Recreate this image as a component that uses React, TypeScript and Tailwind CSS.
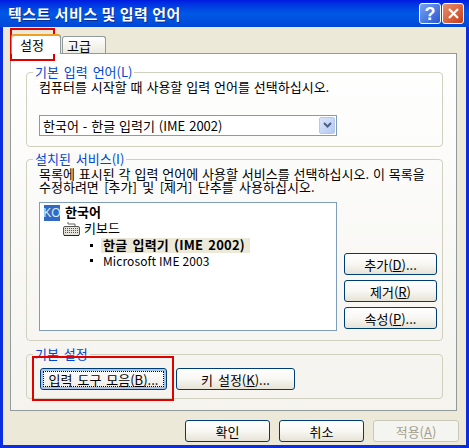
import React from "react";

const font = { fontFamily: '"Noto Sans CJK KR", "Liberation Sans", sans-serif' };

function XpButton({ w, children, focused, disabled }: { w: string; children: React.ReactNode; focused?: boolean; disabled?: boolean }) {
  return (
    <div
      className={`${w} h-[22px] shrink-0 rounded-[3px] border flex items-center justify-center text-[13px] leading-none [word-spacing:2px] ${
        disabled
          ? "border-[#c9c7ba] bg-[#f4f4f0] text-[#a3a08f]"
          : focused
          ? "border-[#003c74] bg-gradient-to-b from-white to-[#ecebe5] text-black shadow-[inset_0_0_0_2px_#a9c4ea]"
          : "border-[#003c74] bg-gradient-to-b from-white via-[#f8f7f3] to-[#e6e3d6] text-black"
      }`}
    >
      {focused ? (
        <span className="flex h-full w-full items-center justify-center p-[2px]">
          <span className="flex h-full w-full items-center justify-center border border-dotted border-black">{children}</span>
        </span>
      ) : (
        children
      )}
    </div>
  );
}

function Legend({ children, bg }: { children: React.ReactNode; bg: string }) {
  return (
    <span className={`${bg} absolute left-[6px] top-[-8px] px-[2px] text-[13px] leading-[14px] text-[#0046d5] whitespace-nowrap [word-spacing:2px]`}>
      {children}
    </span>
  );
}

function Keyboard() {
  return (
    <svg width="17" height="16" viewBox="0 0 17 16" className="shrink-0">
      <path d="M12 5V3H5V1" fill="none" stroke="#666" />
      <rect x="0.5" y="5.5" width="16" height="9" rx="1.5" fill="#e4e4dc" stroke="#555" />
      <path d="M2 7.5h13M2 9.5h13M2 11.5h13" stroke="#555" strokeDasharray="1 1" />
      <path d="M1 14.5h15" stroke="#222" />
    </svg>
  );
}

export default function App() {
  return (
    <div style={font} className="relative flex h-[448px] w-[469px] flex-col overflow-hidden bg-[#0a2de0]">
      {/* title bar */}
      <div className="flex h-[27px] shrink-0 items-center justify-between bg-gradient-to-b from-[#0018e0] via-[#0058e6] to-[#0048d8] pl-[8px] pr-[5px]">
        <span className="text-[15px] font-bold leading-none tracking-[0.5px] text-white [text-shadow:1px_1px_0_#0a2a90]">텍스트 서비스 및 입력 언어</span>
        <div className="flex gap-[1px]">
          <div className="flex h-[21px] w-[22px] items-center justify-center rounded-[3px] border border-white bg-gradient-to-br from-[#7aa2f0] to-[#2a55d0] text-[18px] font-bold leading-none text-white" style={{ fontFamily: '"Liberation Sans", sans-serif' }}>?</div>
          <div className="flex h-[21px] w-[22px] items-center justify-center rounded-[3px] border border-white bg-gradient-to-br from-[#e8906c] to-[#c63a12]">
            <svg width="13" height="13" viewBox="0 0 13 13"><path d="M2 2l9 9M11 2l-9 9" stroke="white" strokeWidth="2.2" /></svg>
          </div>
        </div>
      </div>

      {/* body */}
      <div className="mx-[3px] mb-[3px] flex flex-1 flex-col bg-[#ece9d8] px-[7px] pt-[7px]">
        {/* tabs */}
        <div className="relative z-10 flex h-[19px] items-end pl-[1px]">
          <div className="relative flex h-[20px] w-[50px] translate-y-[1px] items-center rounded-t-[3px] border-x border-[#919b9c] bg-white pl-[8px] text-[13px] leading-none text-black shadow-[inset_0_2px_0_#f0a020]">설정</div>
          <div className="ml-[1px] flex h-[17px] w-[44px] items-center rounded-t-[3px] border-x border-t border-[#919b9c] bg-gradient-to-b from-white to-[#ecebe0] pl-[4px] text-[13px] leading-none text-black">고급</div>
        </div>

        {/* panel */}
        <div className="flex h-[358px] w-[447px] flex-col border border-[#919b9c] bg-gradient-to-b from-white to-[#f4f3ee] pl-[15px] pr-[13px] pt-[18px] text-[13px] text-black">
          {/* group 1 */}
          <div className="relative h-[75px] w-[417px] shrink-0 rounded-[4px] border border-[#d0d0bf] pl-[12px] pt-[6px]">
            <Legend bg="bg-[#fdfdfc]">기본 입력 언어(L)</Legend>
            <p className="whitespace-nowrap leading-[16px] [word-spacing:1px]">컴퓨터를 시작할 때 사용할 입력 언어를 선택하십시오.</p>
            <div className="mt-[20px] flex h-[21px] w-[298px] items-center justify-between border border-[#7f9db9] bg-white pl-[3px] pr-[1px]">
              <span className="leading-none [word-spacing:1px]">한국어 - 한글 입력기 (IME 2002)</span>
              <div className="flex h-[17px] w-[16px] items-center justify-center rounded-[2px] border border-[#b4c8f0] bg-gradient-to-br from-[#dbe5fb] to-[#b5c8f2]">
                <svg width="9" height="7" viewBox="0 0 9 7"><path d="M1 1l3.5 3.5L8 1" fill="none" stroke="#4d6185" strokeWidth="2" /></svg>
              </div>
            </div>
          </div>

          {/* group 2 */}
          <div className="relative mt-[12px] h-[182px] w-[417px] shrink-0 rounded-[4px] border border-[#d0d0bf] pl-[12px] pt-[7px]">
            <Legend bg="bg-[#fafaf8]">설치된 서비스(I)</Legend>
            <p className="whitespace-nowrap leading-[13px] [word-spacing:1px]">
              목록에 표시된 각 입력 언어에 사용할 서비스를 선택하십시오. 이 목록을
              <br />
              <span className="[word-spacing:2.5px]">수정하려면 [추가] 및 [제거] 단추를 사용하십시오.</span>
            </p>
            <div className="mt-[9px] flex items-end">
              <div className="h-[129px] w-[298px] border border-[#7f9db9] bg-white pt-[1px]">
                <div className="flex h-[17px] items-center pl-[4px]">
                  <span className="flex h-[16px] w-[16px] items-center justify-center bg-[#316ac5] text-[12px] leading-none text-[#dfe8f8]" style={{ fontFamily: '"Liberation Sans", sans-serif' }}>KO</span>
                  <span className="ml-[5px] pb-[3px] font-bold leading-none">한국어</span>
                </div>
                <div className="flex h-[16px] items-center pl-[23px]">
                  <Keyboard />
                  <span className="ml-[4px] pb-[4px] leading-none">키보드</span>
                </div>
                <div className="flex h-[16px] items-center pl-[50px]">
                  <span className="h-[3px] w-[3px] shrink-0 bg-black" />
                  <span className="ml-[8px] flex h-[15px] w-[149px] items-center whitespace-nowrap bg-[#ece9d8] pb-[2px] pl-[2px] font-bold leading-none tracking-[0.2px] [word-spacing:2px]">
                    한글 입력기 (IME 2002)
                  </span>
                </div>
                <div className="flex h-[15px] items-center pl-[50px]">
                  <span className="h-[3px] w-[3px] shrink-0 bg-black" />
                  <span className="ml-[10px] text-[12px] leading-none tracking-[0.1px]">Microsoft IME 2003</span>
                </div>
              </div>
              <div className="mb-[2px] ml-[7px] flex flex-col gap-[5px]">
                <XpButton w="w-[93px]"><span>추가(<u>D</u>)...</span></XpButton>
                <XpButton w="w-[93px]"><span>제거(<u>R</u>)</span></XpButton>
                <XpButton w="w-[93px]"><span>속성(<u>P</u>)...</span></XpButton>
              </div>
            </div>
          </div>

          {/* group 3 */}
          <div className="relative mt-[13px] h-[45px] w-[417px] shrink-0 rounded-[4px] border border-[#d0d0bf] pl-[13px] pt-[13px]">
            <Legend bg="bg-[#f5f4f0]">기본 설정</Legend>
            <div className="flex gap-[9px]">
              <XpButton w="w-[127px]" focused><span>입력 도구 모음(<u>B</u>)...</span></XpButton>
              <XpButton w="w-[119px]"><span>키 설정(<u>K</u>)...</span></XpButton>
            </div>
          </div>
        </div>

        {/* footer buttons */}
        <div className="mt-[9px] flex justify-end gap-[9px]">
          <XpButton w="w-[85px]"><span>확인</span></XpButton>
          <XpButton w="w-[85px]"><span>취소</span></XpButton>
          <XpButton w="w-[86px]" disabled><span>적용(<u>A</u>)</span></XpButton>
        </div>
      </div>

      {/* red annotation rectangles */}
      <div className="absolute left-[10px] top-[28px] h-[33px] w-[45px] border-2 border-[#e00000]" />
      <div className="absolute left-[32px] top-[356px] h-[45px] w-[142px] border-2 border-[#e00000]" />
    </div>
  );
}
